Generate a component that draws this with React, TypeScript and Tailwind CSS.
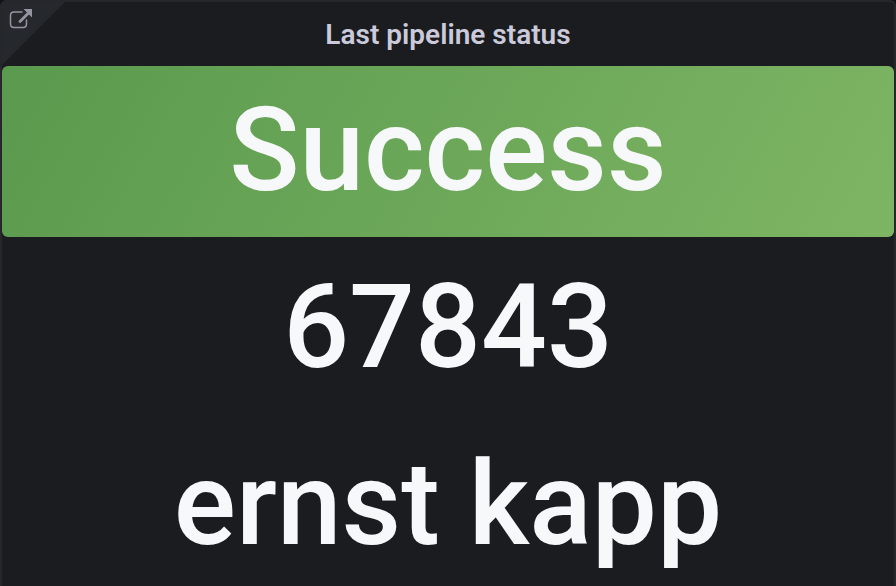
const values = ["67843", "ernst kapp"];

export default function App() {
  return (
    <div className="min-h-screen bg-[#111216]">
      <main className="relative flex min-h-screen flex-col overflow-hidden rounded-t-md border-2 border-b-0 border-[#25272b] bg-[#1b1c20] font-[Roboto,sans-serif] font-medium text-[#f7f8fa]">
        <a
          href="#pipeline"
          aria-label="Open pipeline"
          className="absolute -left-0.5 -top-0.5 block size-[67px] bg-[#25282c] text-[#9595a2] [clip-path:polygon(0_0,100%_0,0_100%)]"
        >
          <svg viewBox="0 0 67 67" className="size-full" fill="none">
            <path
              d="M22 12h-8q-3.5 0-3.5 3.5v8.5q0 3.5 3.5 3.5h9q3.5 0 3.5-3.5v-4"
              stroke="currentColor"
              strokeWidth="1.5"
              strokeLinecap="round"
            />
            <path d="M20 21.5l8-8" stroke="currentColor" strokeWidth="2.8" strokeLinecap="round" />
            <path d="M23.5 9H32v8.5z" fill="currentColor" />
          </svg>
        </a>
        <header className="flex h-16 items-center justify-center pt-0.5">
          <h1 className="text-[28px] font-semibold leading-8 text-[#cacada]">Last pipeline status</h1>
        </header>
        <div className="flex flex-col gap-1.5">
          <section className="flex h-[171px] items-center justify-center rounded-md bg-linear-120 from-[#5a9a4e] to-[#7eb564] pb-1">
            <p className="text-[116px] leading-none">Success</p>
          </section>
          {values.map((value) => (
            <section key={value} className="flex h-[171px] items-center justify-center pb-1">
              <p className="whitespace-nowrap text-[116px] leading-none">{value}</p>
            </section>
          ))}
        </div>
      </main>
    </div>
  );
}
